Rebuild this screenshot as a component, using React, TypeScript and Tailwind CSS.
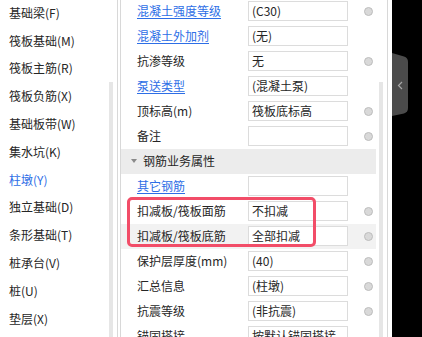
import React from 'react';

type Row = { label: string; value?: string; link?: boolean; dot?: boolean; active?: boolean; header?: boolean };

const menu = [
  '基础梁(F)',
  '筏板基础(M)',
  '筏板主筋(R)',
  '筏板负筋(X)',
  '基础板带(W)',
  '集水坑(K)',
  '柱墩(Y)',
  '独立基础(D)',
  '条形基础(T)',
  '桩承台(V)',
  '桩(U)',
  '垫层(X)',
];

const rows: Row[] = [
  { label: '混凝土强度等级', value: '(C30)', link: true, dot: true },
  { label: '混凝土外加剂', value: '(无)', link: true },
  { label: '抗渗等级', value: '无', dot: true },
  { label: '泵送类型', value: '(混凝土泵)', link: true },
  { label: '顶标高(m)', value: '筏板底标高', dot: true },
  { label: '备注', value: '', dot: true },
  { label: '钢筋业务属性', header: true },
  { label: '其它钢筋', value: '', link: true },
  { label: '扣减板/筏板面筋', value: '不扣减', dot: true },
  { label: '扣减板/筏板底筋', value: '全部扣减', dot: true, active: true },
  { label: '保护层厚度(mm)', value: '(40)', dot: true },
  { label: '汇总信息', value: '(柱墩)', dot: true },
  { label: '抗震等级', value: '(非抗震)', dot: true },
  { label: '锚固搭接', value: '按默认锚固搭接' },
];

function PropRow({ row }: { row: Row }) {
  if (row.header) {
    return (
      <div className="flex h-[25px] shrink-0 items-center bg-[#ececec]">
        <svg width="6" height="4" viewBox="0 0 6 4" className="ml-[10px] mr-[6px]">
          <polygon points="0,0 6,0 3,4" fill="#8a8a8a" />
        </svg>
        <span className="text-[#262626]">{row.label}</span>
      </div>
    );
  }
  return (
    <div className={`flex h-[25px] shrink-0 items-center ${row.active ? 'bg-[#f2f2f2]' : ''}`}>
      <div className="w-[127px] shrink-0 pl-[16px]">
        <span
          className={
            row.link ? 'text-[#2d6ee6] underline decoration-[#2d6ee6] underline-offset-[2px]' : 'text-[#262626]'
          }
        >
          {row.label}
        </span>
      </div>
      <div className="flex h-[20px] w-[100px] shrink-0 items-center overflow-hidden border border-[#dcdcdc] bg-white pl-[3px] text-[#262626] whitespace-nowrap">
        {row.value}
      </div>
      <div className="flex w-[28px] shrink-0 justify-end pr-[3px]">
        {row.dot && <div className="h-[9px] w-[9px] rounded-full border border-[#bdbdbd] bg-[#d9d9d9]" />}
      </div>
    </div>
  );
}

export default function App() {
  return (
    <div
      className="flex h-[337px] w-[422px] overflow-hidden bg-white text-[12px] leading-none"
      style={{ fontFamily: '"Noto Sans CJK SC", "Noto Sans", sans-serif' }}
    >
      {/* left list */}
      <div className="flex w-[118px] shrink-0 border-r border-[#d8d8d8]">
        <div className="-mt-[1px] flex w-[109px] shrink-0 flex-col">
          {menu.map((m) => (
            <div
              key={m}
              className={`flex h-[27.8px] shrink-0 items-center pl-[9px] ${m === '柱墩(Y)' ? 'text-[#2d6ee6]' : 'text-[#262626]'}`}
            >
              {m}
            </div>
          ))}
        </div>
        <div className="mt-[82px] w-[4px] shrink-0 bg-[#e6e6e6]" />
      </div>

      <div className="w-[3px] shrink-0 border-r border-[#d8d8d8]" />

      {/* property panel */}
      <div className="relative flex w-[267px] shrink-0 border-r border-[#d8d8d8]">
        <div className="-mt-[1.5px] flex w-[255px] shrink-0 flex-col">
          {rows.map((r) => (
            <PropRow key={r.label} row={r} />
          ))}
        </div>
        <div className="ml-[3px] mt-[82px] w-[4px] shrink-0 bg-[#e6e6e6]" />
        <div className="pointer-events-none absolute left-[6px] top-[197px] h-[50px] w-[189px] rounded-[5px] border-[3px] border-[#f24d68]" />
      </div>

      <div className="w-[4px] shrink-0" />

      {/* dark area with collapse tab */}
      <div className="flex-1 bg-black">
        <svg width="17" height="64" viewBox="0 0 17 64" className="mt-[53px]">
          <path d="M0 0 L12 3.5 Q16 4.8 16 9 L16 55 Q16 59.2 12 60.4 L0 63 Z" fill="#4b4b4b" />
          <path d="M10 29 L6.5 32.5 L10 36" fill="none" stroke="#a8a8a8" strokeWidth="1.2" />
        </svg>
      </div>
    </div>
  );
}
